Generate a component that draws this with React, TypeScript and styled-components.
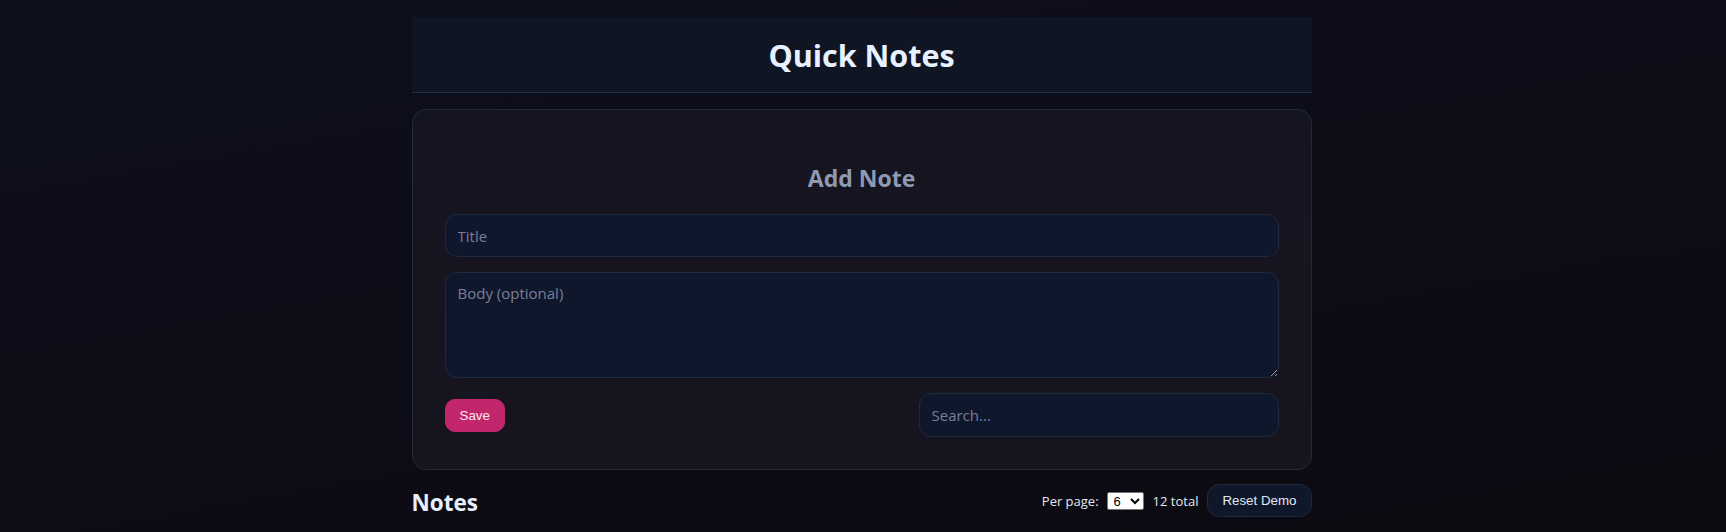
import React, { useState } from 'react'
import styled, { createGlobalStyle } from 'styled-components'

const GlobalStyle = createGlobalStyle`
  html, body {
    margin: 0;
    padding: 0;
  }

  body {
    min-height: 100vh;
    background: linear-gradient(170deg, #0e0f1d 0%, #0d0d18 45%, #0c0a10 100%);
    font-family: "Open Sans", "Noto Sans", sans-serif;
    color: #e2e8f0;
  }

  * {
    box-sizing: border-box;
  }
`

const Page = styled.div`
  max-width: 903px;
  margin: 0 auto;
  padding: 17px 3px 40px 0;
`

const Header = styled.header`
  background: #0f1522;
  border-bottom: 1px solid #1f3140;
  padding: 18px 16px 16px;
  text-align: center;

  h1 {
    margin: 0;
    font-size: 30.5px;
    line-height: 41px;
    font-weight: 700;
    color: #e8f1ff;
  }
`

const Card = styled.section`
  margin-top: 16px;
  padding: 32px;
  border: 1px solid #232a3a;
  border-radius: 14px;
  background: linear-gradient(180deg, #151521 0%, #17141e 100%);
  display: flex;
  flex-direction: column;
  gap: 15px;
`

const CardTitle = styled.h2`
  margin: 22px 0 7px;
  font-size: 23px;
  line-height: 28px;
  font-weight: 700;
  text-align: center;
  color: #8e9ab2;
`

const fieldStyles = `
  width: 100%;
  padding: 12px;
  border: 1px solid #1e2a3d;
  border-radius: 12px;
  background: #0e172b;
  color: #e2e8f0;
  font-family: "Open Sans", "Noto Sans", sans-serif;
  font-size: 15px;
  outline: none;

  &::placeholder {
    color: #7a7e99;
  }
`

const TextInput = styled.input<{ $width?: number }>`
  ${fieldStyles}
  height: ${(p) => (p.$width ? 44 : 43)}px;
  ${(p) => (p.$width ? `width: ${p.$width}px;` : '')}
`

const TextArea = styled.textarea`
  ${fieldStyles}
  height: 106px;
  resize: vertical;
  line-height: 20px;
  padding-top: 10px;
`

const ActionRow = styled.div`
  display: flex;
  align-items: center;
  justify-content: space-between;
`

const Button = styled.button<{ $variant?: 'primary' | 'ghost' }>`
  font-family: "Liberation Sans", Arial, sans-serif;
  font-size: 13.333px;
  line-height: 15px;
  padding: 8px 14px;
  cursor: pointer;
  border-radius: ${(p) => (p.$variant === 'primary' ? '10px' : '12px')};
  border: 1px solid ${(p) => (p.$variant === 'primary' ? '#c2276c' : '#1e293b')};
  background: ${(p) => (p.$variant === 'primary' ? '#c2276c' : '#0f172a')};
  color: ${(p) => (p.$variant === 'primary' ? '#fbe7f1' : '#e2e8f0')};
`

const Toolbar = styled.div`
  margin-top: 14px;
  display: flex;
  align-items: center;
  justify-content: space-between;

  h2 {
    margin: 5px 0 0;
    font-size: 22.5px;
    line-height: 28px;
    font-weight: 700;
    color: #e6f0ff;
  }
`

const Controls = styled.div`
  display: flex;
  align-items: center;
  gap: 9px;
  font-size: 13px;
  color: #e2e8f0;

  label {
    display: flex;
    align-items: center;
    gap: 8px;
  }

  select {
    height: 18px;
    width: 37px;
    font-size: 13px;
    font-family: "Liberation Sans", Arial, sans-serif;
    background: #fff;
    color: #000;
    border: 1px solid #767676;
    border-radius: 2px;
    padding: 0 0 0 2px;
  }
`

const App = () => {
  const [title, setTitle] = useState('')
  const [body, setBody] = useState('')
  const [query, setQuery] = useState('')
  const [perPage, setPerPage] = useState(6)

  return (
    <>
      <GlobalStyle />
      <Page>
        <Header>
          <h1>Quick Notes</h1>
        </Header>

        <Card>
          <CardTitle>Add Note</CardTitle>
          <TextInput
            placeholder="Title"
            value={title}
            onChange={(e) => setTitle(e.target.value)}
          />
          <TextArea
            placeholder="Body (optional)"
            value={body}
            onChange={(e) => setBody(e.target.value)}
          />
          <ActionRow>
            <Button $variant="primary">Save</Button>
            <TextInput
              $width={360}
              placeholder="Search..."
              value={query}
              onChange={(e) => setQuery(e.target.value)}
            />
          </ActionRow>
        </Card>

        <Toolbar>
          <h2>Notes</h2>
          <Controls>
            <label>
              Per page:
              <select value={perPage} onChange={(e) => setPerPage(Number(e.target.value))}>
                <option value={3}>3</option>
                <option value={6}>6</option>
                <option value={12}>12</option>
              </select>
            </label>
            <span>12 total</span>
            <Button $variant="ghost">Reset Demo</Button>
          </Controls>
        </Toolbar>
      </Page>
    </>
  )
}

export default App
